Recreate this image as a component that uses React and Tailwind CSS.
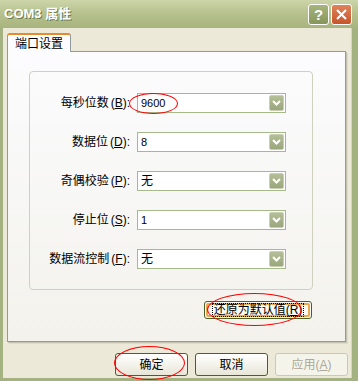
import React from 'react';

const rows = [
  { label: '每秒位数', key: 'B', value: '9600', latin: true },
  { label: '数据位', key: 'D', value: '8', latin: true },
  { label: '奇偶校验', key: 'P', value: '无' },
  { label: '停止位', key: 'S', value: '1', latin: true },
  { label: '数据流控制', key: 'F', value: '无' },
];

const cjk = { fontFamily: '"Liberation Sans", "Noto Sans CJK SC", sans-serif' };

const Chevron = () => (
  <svg width="9" height="6" viewBox="0 0 9 6">
    <path d="M1 1 L4.5 4.5 L8 1" fill="none" stroke="#fff" strokeWidth="2" />
  </svg>
);

const Select = ({ value, latin }) => (
  <div className="ml-[7px] flex h-[20px] w-[149px] items-center justify-between border border-[#a5b98b] bg-white pl-[3px] pr-[1px]">
    <span className={latin ? 'text-[11px] text-black' : 'text-[12px] text-black'}>{value}</span>
    <div className="flex h-[16px] w-[15px] items-center justify-center rounded-[2px] border border-[#c9cfb4] bg-linear-to-b from-[#b4be97] to-[#9aa67c]">
      <Chevron />
    </div>
  </div>
);

const Button = ({ children, disabled }) => (
  <div
    className={
      disabled
        ? 'flex h-[23px] w-[73px] items-center justify-center rounded-[3px] border border-[#cac8bb] bg-[#f5f4ea] text-[12px] text-[#aca899]'
        : 'flex h-[23px] w-[73px] items-center justify-center rounded-[3px] border border-[#4a5f2a] bg-linear-to-b from-[#ffffff] to-[#e8e6d8] text-[12px] text-black'
    }
  >
    {children}
  </div>
);

export default function App() {
  return (
    <div className="relative flex h-[381px] w-[358px] flex-col overflow-hidden bg-[#9fae7b] select-none" style={cjk}>
      {/* Title bar */}
      <div className="flex h-[28px] shrink-0 items-center justify-between bg-linear-to-b from-[#cdd5a8] via-[#b5c08d] to-[#a8b47e] pl-[4px] pr-[6px]">
        <span className="text-[13px] font-bold text-white [text-shadow:1px_1px_0_#6f7d4c]">COM3 属性</span>
        <div className="flex gap-[2px]">
          <div className="flex h-[21px] w-[21px] items-center justify-center rounded-[3px] border border-white bg-linear-to-b from-[#a7b57c] to-[#86965a] text-[15px] font-bold leading-none text-white">
            ?
          </div>
          <div className="flex h-[21px] w-[21px] items-center justify-center rounded-[3px] border border-white bg-linear-to-b from-[#e0825a] to-[#c85428]">
            <svg width="11" height="11" viewBox="0 0 11 11">
              <path d="M1 1 L10 10 M10 1 L1 10" stroke="#fff" strokeWidth="2" />
            </svg>
          </div>
        </div>
      </div>

      {/* Body */}
      <div className="flex flex-1 flex-col border-b-[3px] border-l-[3px] border-r-[6px] border-[#a3b280] bg-[#ece9d8] pl-[4px] pt-[5px] shadow-[inset_-1px_0_0_#d6d3c2]">
        {/* Tab */}
        <div className="relative z-10 -mb-px flex h-[19px] w-[64px] items-center justify-center rounded-t-[3px] border-x border-t-2 border-x-[#919b9c] border-t-[#e68b2c] bg-[#fcfcfe] text-[12px] text-black">
          端口设置
        </div>

        {/* Panel */}
        <div className="flex h-[291px] w-[339px] flex-col border border-[#919b9c] bg-linear-to-b from-[#fcfcfe] to-[#f3f2ec] pl-[21px] pt-[19px] shadow-[1px_1px_0_#c5c2b2,2px_2px_0_#dedbcb]">
          <div className="flex h-[219px] w-[284px] flex-col gap-[19px] rounded-[4px] border border-[#d0d0bf] pt-[21px]">
            {rows.map((r) => (
              <div key={r.key} className="flex h-[20px] items-center">
                <div className="w-[100px] text-right text-[12px] text-black">
                  {r.label}
                  <span className="ml-[2px]">
                    (<span className="underline">{r.key}</span>):
                  </span>
                </div>
                <Select value={r.value} latin={r.latin} />
              </div>
            ))}
          </div>
          <div className="mt-[11px] flex w-[283px] justify-end">
            <div className="flex h-[18px] w-[108px] items-center justify-center rounded-[3px] border border-[#4a5f2a] bg-[#fbfaf4] p-px">
              <div className="flex h-full w-full items-center justify-center rounded-[2px] border-2 border-[#eba94f] bg-[#fbfaf4]">
                <span className="border border-dotted border-black px-[1px] text-[12px] leading-[12px] text-black">
                  还原为默认值(<span className="underline">R</span>)
                </span>
              </div>
            </div>
          </div>
        </div>

        {/* Bottom buttons */}
        <div className="mt-[11px] flex justify-end gap-[7px] pr-[4px]">
          <Button>确定</Button>
          <Button>取消</Button>
          <Button disabled>
            应用(<span className="underline">A</span>)
          </Button>
        </div>
      </div>

      {/* red annotation ellipses */}
      <div className="pointer-events-none absolute left-[129px] top-[93px] h-[21px] w-[49px] rounded-[50%] border border-[#ff0000]" />
      <div className="pointer-events-none absolute left-[207px] top-[293px] h-[33px] w-[95px] rounded-[50%] border border-[#ff0000]" />
      <div className="pointer-events-none absolute left-[114px] top-[346px] h-[34px] w-[71px] rounded-[50%] border border-[#ff0000]" />
    </div>
  );
}
